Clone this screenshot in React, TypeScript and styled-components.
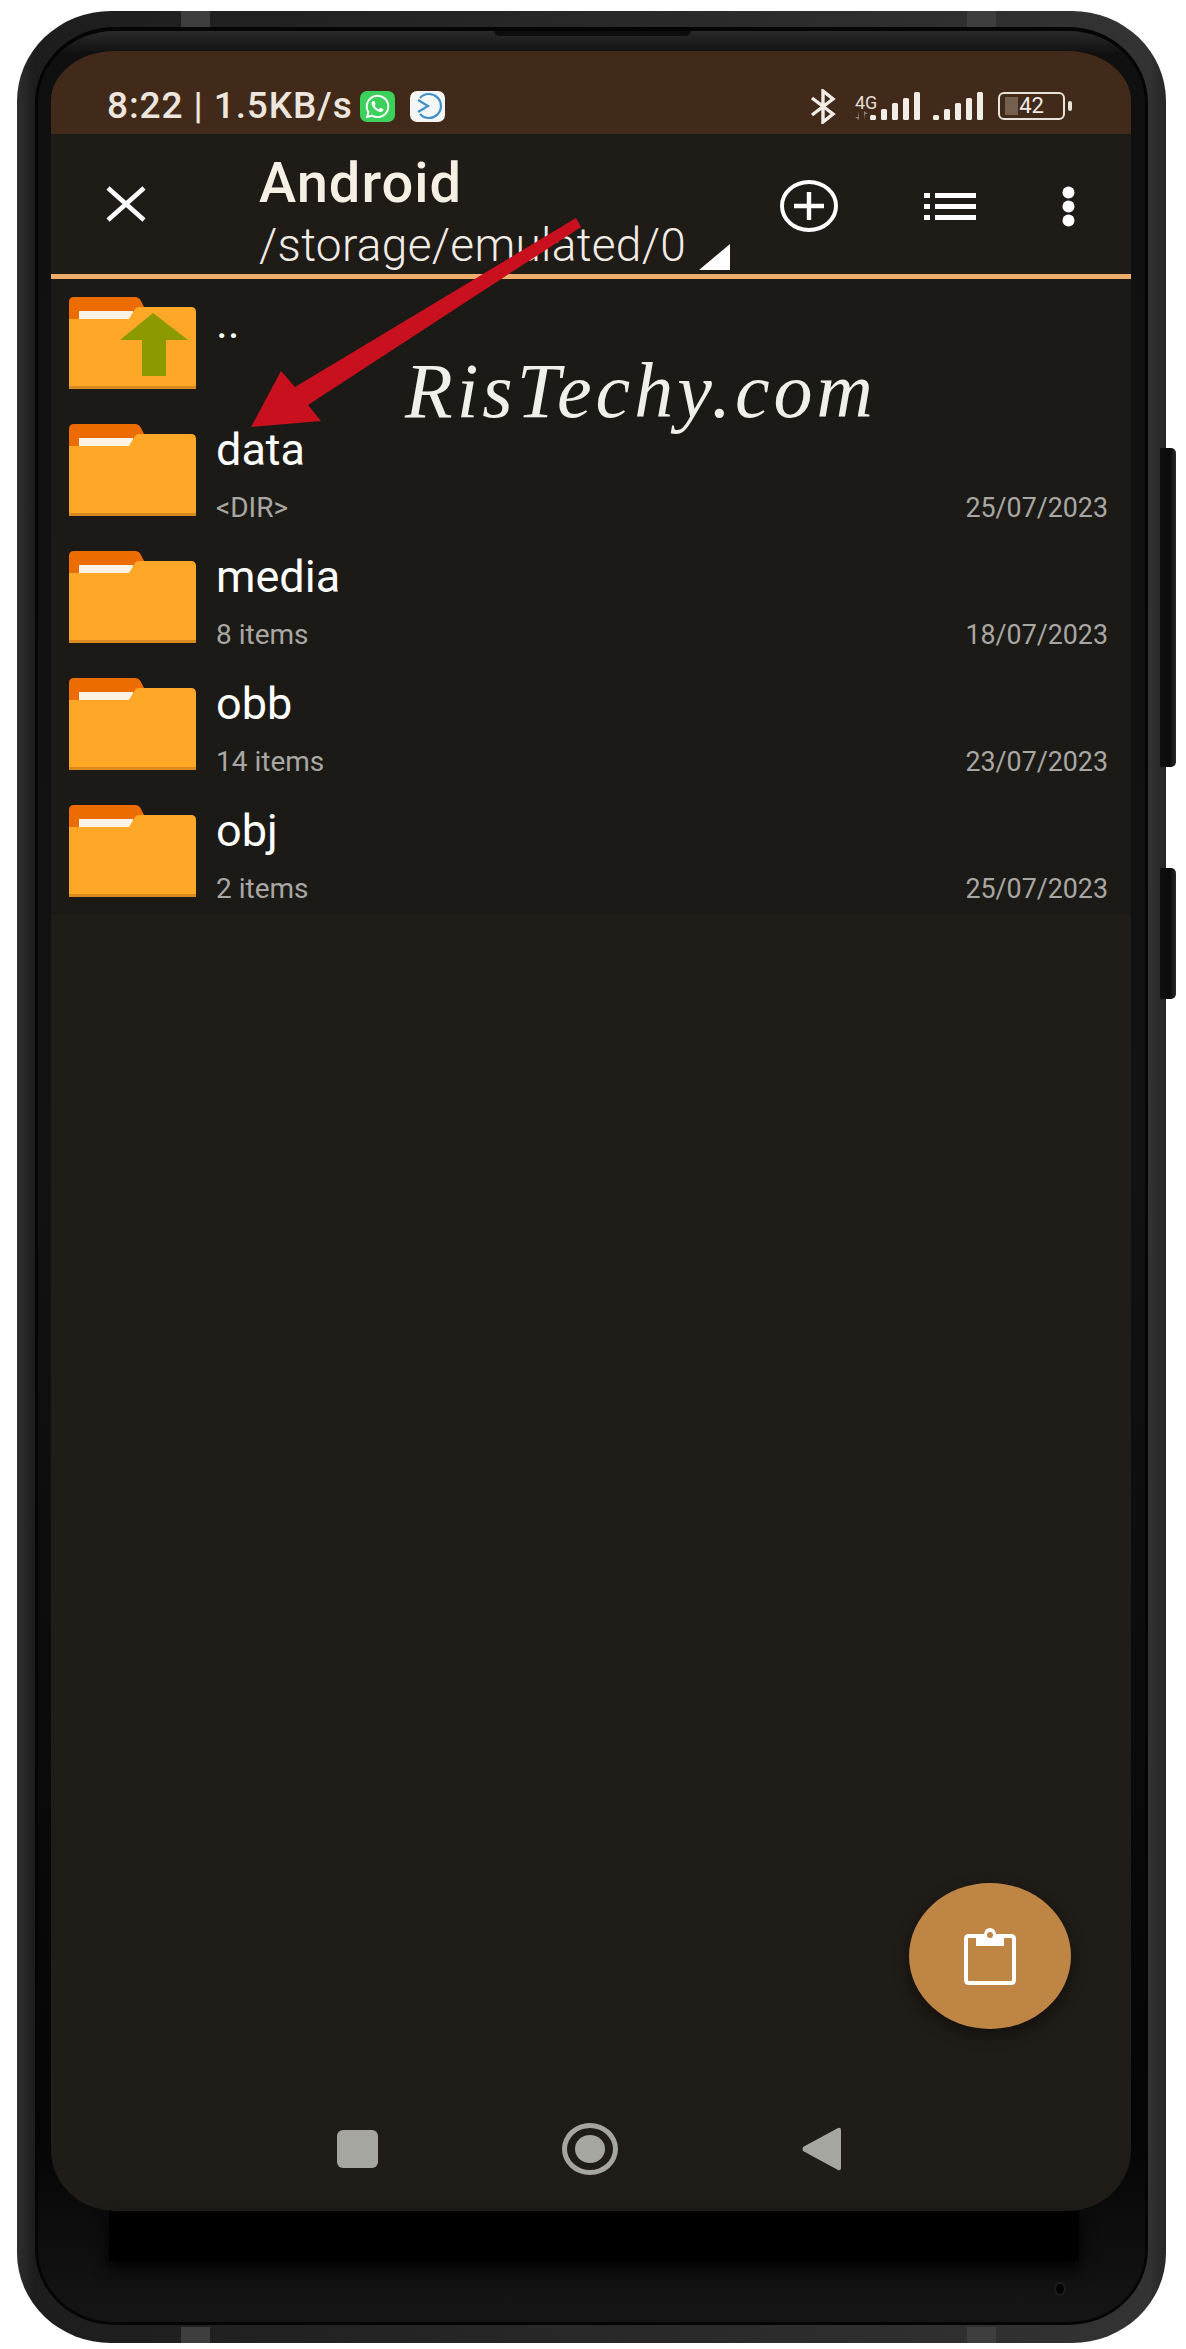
import { createGlobalStyle, styled } from "styled-components";
import { FaWhatsapp } from "react-icons/fa";

const GlobalStyle = createGlobalStyle`
	html, body {
		margin: 0;
		background: #ffffff;
		font-family: Roboto, "Liberation Sans", sans-serif;
	}
`;

interface folderType {
	name: string;
	meta?: string;
	date?: string;
	up?: boolean;
}

const folders: folderType[] = [
	{ name: "..", up: true },
	{ name: "data", meta: "<DIR>", date: "25/07/2023" },
	{ name: "media", meta: "8 items", date: "18/07/2023" },
	{ name: "obb", meta: "14 items", date: "23/07/2023" },
	{ name: "obj", meta: "2 items", date: "25/07/2023" },
];

const Folder = ({ up }: { up?: boolean }) => (
	<FolderIcon viewBox="0 0 127 92">
		<path
			d="M5 0H66Q70 0 72 4L76 12V40H0V5Q0 0 5 0Z"
			fill="#ec6c02"
		/>
		<rect x="10" y="14" width="54" height="8" fill="#fbf3e6" />
		<path
			d="M0 22H60L66 12Q67 10 70 10H122Q127 10 127 15V92H0Z"
			fill="#ffa726"
		/>
		<rect x="0" y="89" width="127" height="3" fill="#d98a1e" />
		{up && (
			<path d="M84 16L119 43H97V79H73V43H51Z" fill="#8a9a00" />
		)}
	</FolderIcon>
);

const SignalBars = ({ left }: { left: number }) => (
	<svg width="50" height="29" viewBox="0 0 50 29" style={{ marginLeft: left }}>
		<rect x="0" y="23" width="6" height="5" rx="1.5" fill="#f1ece6" />
		<rect x="11" y="17" width="6" height="11" rx="1.5" fill="#f1ece6" />
		<rect x="22" y="11" width="6" height="17" rx="1.5" fill="#f1ece6" />
		<rect x="33" y="6" width="6" height="22" rx="1.5" fill="#f1ece6" />
		<rect x="44" y="0" width="6" height="28" rx="1.5" fill="#f1ece6" />
	</svg>
);

const App = () => {
	return (
		<>
			<GlobalStyle />
			<Stage>
				<SideKey $top={448} $height={319} />
				<SideKey $top={868} $height={131} />
				<Antenna $left={164} $top />
				<Antenna $left={950} $top />
				<Antenna $left={164} />
				<Antenna $left={950} />
				<Phone>
					<Seam>
						<Bezel>
							<Earpiece />
							<Screen>
								<StatusBar>
									<StatusTime>8:22 | 1.5KB/s</StatusTime>
									<AppBadge $bg="#3bd15b">
										<FaWhatsapp size={27} color="#ffffff" />
									</AppBadge>
									<AppBadge $bg="#f4f6f6" $gap>
										<svg width="30" height="28" viewBox="0 0 30 28">
											<path
												d="M7 6A12 12 0 1 1 7 22"
												fill="none"
												stroke="#3f8fc9"
												strokeWidth="2.2"
											/>
											<path
												d="M5 8L15 14L5 20"
												fill="none"
												stroke="#3f8fc9"
												strokeWidth="2.2"
											/>
										</svg>
									</AppBadge>
									<StatusRight>
										<svg width="26" height="35" viewBox="0 0 26 35">
											<path
												d="M2 9L23 25L13 33V2L23 10L2 26"
												fill="none"
												stroke="#f1ece6"
												strokeWidth="3.4"
											/>
										</svg>
										<NetworkType>
											<span>4G</span>
											<svg width="14" height="9" viewBox="0 0 14 9">
												<path d="M4 0V9L0 6H3ZM9 9V0L13 3H10Z" fill="#8a817a" />
											</svg>
										</NetworkType>
										<SignalBars left={0} />
										<SignalBars left={13} />
										<Battery>
											<BatteryFill />
											<BatteryText>42</BatteryText>
											<BatteryTip />
										</Battery>
									</StatusRight>
								</StatusBar>
								<Toolbar>
									<CloseButton>
										<svg width="40" height="36" viewBox="0 0 40 36">
											<path
												d="M2 2L38 34M38 2L2 34"
												stroke="#ffffff"
												strokeWidth="4.6"
												fill="none"
											/>
										</svg>
									</CloseButton>
									<TitleBlock>
										<Title>Android</Title>
										<PathRow>
											<span>/storage/emulated/0</span>
											<DropTriangle viewBox="0 0 31 26">
												<path d="M31 0V26H0Z" fill="#ffffff" />
											</DropTriangle>
										</PathRow>
									</TitleBlock>
									<Actions>
										<svg width="58" height="52" viewBox="0 0 58 52">
											<ellipse
												cx="29"
												cy="26"
												rx="27"
												ry="24"
												fill="none"
												stroke="#ffffff"
												strokeWidth="4"
											/>
											<path
												d="M29 12V40M14 26H44"
												stroke="#ffffff"
												strokeWidth="4.4"
											/>
										</svg>
										<svg width="52" height="27" viewBox="0 0 52 27">
											<path
												d="M0 0H6V5H0ZM0 11H6V16H0ZM0 22H6V27H0ZM11 0H52V5H11ZM11 11H52V16H11ZM11 22H52V27H11Z"
												fill="#ffffff"
											/>
										</svg>
										<svg width="13" height="41" viewBox="0 0 13 41">
											<circle cx="6.5" cy="6.5" r="6" fill="#ffffff" />
											<circle cx="6.5" cy="20.5" r="6" fill="#ffffff" />
											<circle cx="6.5" cy="34.5" r="6" fill="#ffffff" />
										</svg>
									</Actions>
								</Toolbar>
								<AccentLine />
								<FileList>
									{folders.map((folder) => (
										<FileRow key={folder.name}>
											<Folder up={folder.up} />
											<FileText>
												<FileName>{folder.name}</FileName>
												{folder.meta && (
													<MetaRow>
														<span>{folder.meta}</span>
														<MetaDate>{folder.date}</MetaDate>
													</MetaRow>
												)}
											</FileText>
										</FileRow>
									))}
								</FileList>
								<NavBar>
									<NavSquare />
									<NavHome>
										<NavHomeDot />
									</NavHome>
									<svg width="39" height="44" viewBox="0 0 39 44">
										<path
											d="M36 1Q39 0 39 3V41Q39 44 36 43L1 24Q0 22 1 20Z"
											fill="#a6a6a1"
										/>
									</svg>
								</NavBar>
								<Fab>
									<svg width="52" height="57" viewBox="0 0 52 57">
										<path
											d="M16 8H5Q2 8 2 11V52Q2 55 5 55H47Q50 55 50 52V11Q50 8 47 8H36"
											fill="none"
											stroke="#ffffff"
											strokeWidth="4"
										/>
										<path
											d="M12 6H20Q21 0 26 0Q31 0 32 6H40V18H12Z"
											fill="#ffffff"
										/>
										<circle cx="26" cy="7" r="3" fill="#bf8545" />
									</svg>
								</Fab>
								<Watermark>RisTechy.com</Watermark>
								<PointerArrow viewBox="251 218 330 209">
									<path
										d="M576 218L581 227L308 405L321 421L251 427L281 371L295 387Z"
										fill="#c8101f"
									/>
								</PointerArrow>
							</Screen>
							<Chin />
							<MicHole />
						</Bezel>
					</Seam>
				</Phone>
			</Stage>
		</>
	);
};

export default App;

const Stage = styled.div`
	position: relative;
	width: 1186px;
	height: 2349px;
	padding: 11px 0 0 17px;
	box-sizing: border-box;
	overflow: hidden;
`;

const Phone = styled.div`
	width: 1149px;
	height: 2332px;
	box-sizing: border-box;
	padding: 16px 18px 18px;
	border-radius: 94px / 90px;
	background: linear-gradient(90deg, #2e2e2e, #1d1d1d 1.5%, #333333 98.4%, #262626);
`;

const Seam = styled.div`
	height: 100%;
	box-sizing: border-box;
	padding: 4px 3px 3px;
	border-radius: 80px / 76px;
	background: #050505;
`;

const Bezel = styled.div`
	position: relative;
	height: 100%;
	box-sizing: border-box;
	padding: 20px 16px 0 13px;
	border-radius: 76px / 72px;
	background: linear-gradient(180deg, #2a2a2a, #101010 1%, #121212 50%, #050505 92%, #151515);
`;

const Earpiece = styled.div`
	position: absolute;
	top: 0;
	left: 456px;
	width: 197px;
	height: 5px;
	border-radius: 0 0 8px 8px;
	background: #0d0d0d;
`;

const Screen = styled.div`
	position: relative;
	display: flex;
	flex-direction: column;
	width: 1080px;
	height: 2160px;
	overflow: hidden;
	border-radius: 64px 64px 64px 64px / 50px 50px 61px 61px;
	background: #201c18;
`;

const StatusBar = styled.div`
	display: flex;
	align-items: center;
	flex-shrink: 0;
	height: 83px;
	box-sizing: border-box;
	padding: 27px 66px 0 56px;
	background: #412a1a;
`;

const StatusTime = styled.div`
	width: 253px;
	font-size: 37px;
	font-weight: 500;
	line-height: 40px;
	letter-spacing: 0.9px;
	color: #ece6df;
	white-space: nowrap;
`;

const AppBadge = styled.div<{ $bg: string; $gap?: boolean }>`
	display: flex;
	align-items: center;
	justify-content: center;
	width: 35px;
	height: 31px;
	margin-left: ${(props) => (props.$gap ? "15px" : "0")};
	border-radius: 7px;
	background: ${(props) => props.$bg};
`;

const StatusRight = styled.div`
	display: flex;
	align-items: center;
	margin-left: auto;
`;

const NetworkType = styled.div`
	display: flex;
	flex-direction: column;
	width: 15px;
	margin-left: 19px;
	margin-top: 2px;

	span {
		font-size: 18px;
		line-height: 16px;
		color: #e4ded7;
	}
`;

const Battery = styled.div`
	position: relative;
	display: flex;
	align-items: center;
	justify-content: center;
	width: 67px;
	height: 28px;
	margin-left: 15px;
	box-sizing: border-box;
	border: 2.5px solid #e8e2da;
	border-radius: 6px;
`;

const BatteryFill = styled.div`
	position: absolute;
	left: 5px;
	top: 3px;
	bottom: 3px;
	width: 13px;
	background: #75604f;
`;

const BatteryText = styled.span`
	position: relative;
	font-size: 22px;
	line-height: 24px;
	color: #f1ece6;
`;

const BatteryTip = styled.div`
	position: absolute;
	right: -9px;
	width: 4px;
	height: 10px;
	border-radius: 2px;
	background: #e8e2da;
`;

const Toolbar = styled.div`
	display: flex;
	flex-shrink: 0;
	height: 140px;
	background: #1f1b17;
`;

const CloseButton = styled.div`
	display: flex;
	align-items: center;
	width: 153px;
	padding-left: 55px;
`;

const TitleBlock = styled.div`
	display: flex;
	flex-direction: column;
`;

const Title = styled.div`
	margin-top: 20px;
	font-size: 56px;
	font-weight: 500;
	line-height: 58px;
	letter-spacing: 1px;
	color: #f6efe4;
`;

const PathRow = styled.div`
	display: flex;
	align-items: flex-end;
	margin-top: 8px;
	font-size: 46px;
	font-weight: 300;
	line-height: 50px;
	letter-spacing: 0.3px;
	color: #f1ece6;
	white-space: nowrap;
`;

const DropTriangle = styled.svg`
	width: 31px;
	height: 26px;
	margin-left: 13px;
	margin-bottom: 0;
`;

const Actions = styled.div`
	display: flex;
	align-items: center;
	gap: 86px;
	margin-left: auto;
	padding: 0 56px 0 0;
	margin-top: 4px;
	height: 136px;
`;

const AccentLine = styled.div`
	flex-shrink: 0;
	height: 5px;
	background: #f0ae6d;
`;

const FileList = styled.div`
	display: flex;
	flex-direction: column;
	flex-shrink: 0;
	background: #1c1a16;
`;

const FileRow = styled.div`
	display: flex;
	height: 127px;
	padding: 18px 23px 0 18px;
	box-sizing: border-box;
`;

const FolderIcon = styled.svg`
	flex-shrink: 0;
	width: 127px;
	height: 92px;
`;

const FileText = styled.div`
	flex: 1;
	margin-top: -18px;
	padding: 16px 0 0 20px;
`;

const FileName = styled.div`
	font-size: 45px;
	line-height: 56px;
	color: #ffffff;
`;

const MetaRow = styled.div`
	display: flex;
	justify-content: space-between;
	align-items: baseline;
	margin-top: 14px;
	font-size: 28px;
	line-height: 32px;
	color: #a9a7a3;
`;

const MetaDate = styled.span`
	font-size: 26.8px;
`;

const NavBar = styled.div`
	display: flex;
	align-items: center;
	gap: 184px;
	height: 124px;
	margin-top: auto;
	padding-left: 286px;
`;

const NavSquare = styled.div`
	width: 41px;
	height: 38px;
	border-radius: 6px;
	background: #a6a6a1;
`;

const NavHome = styled.div`
	display: flex;
	align-items: center;
	justify-content: center;
	width: 56px;
	height: 52px;
	box-sizing: border-box;
	border: 5px solid #a6a6a1;
	border-radius: 50%;
`;

const NavHomeDot = styled.div`
	width: 30px;
	height: 28px;
	border-radius: 50%;
	background: #a6a6a1;
`;

const Fab = styled.div`
	position: absolute;
	left: 858px;
	top: 1832px;
	display: flex;
	align-items: center;
	justify-content: center;
	width: 162px;
	height: 146px;
	border-radius: 50%;
	background: #bf8545;
	box-shadow: 0 6px 16px rgba(0, 0, 0, 0.45);
`;

const Watermark = styled.div`
	position: absolute;
	left: 354px;
	top: 295px;
	font-family: "Liberation Serif", serif;
	font-style: italic;
	font-size: 78px;
	line-height: 90px;
	letter-spacing: 4px;
	color: #f0f0ea;
	white-space: nowrap;
`;

const PointerArrow = styled.svg`
	position: absolute;
	left: 200px;
	top: 167px;
	width: 330px;
	height: 209px;
`;

const Chin = styled.div`
	position: absolute;
	left: 71px;
	right: 66px;
	top: 2180px;
	height: 50px;
	background: #000000;
	box-shadow: 0 8px 16px #000000;
`;

const MicHole = styled.div`
	position: absolute;
	left: 1016px;
	top: 2251px;
	width: 12px;
	height: 14px;
	border-radius: 50%;
	border: 2px solid #1d1d1d;
	box-sizing: border-box;
	background: #050505;
`;

const SideKey = styled.div<{ $top: number; $height: number }>`
	position: absolute;
	left: 1160px;
	top: ${(props) => props.$top}px;
	width: 16px;
	height: ${(props) => props.$height}px;
	border-radius: 0 5px 5px 0;
	background: linear-gradient(90deg, #101010, #0a0a0a 60%, #2a2a2a);
`;

const Antenna = styled.div<{ $left: number; $top?: boolean }>`
	position: absolute;
	z-index: 1;
	left: ${(props) => props.$left + 17}px;
	top: ${(props) => (props.$top ? "11px" : "2327px")};
	width: 29px;
	height: 16px;
	background: #3e3e3e;
`;
